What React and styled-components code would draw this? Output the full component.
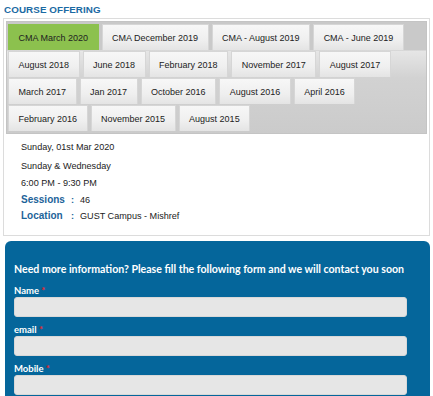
import React from "react";
import styled, { createGlobalStyle } from "styled-components";

const offerings = [
  "CMA March 2020",
  "CMA December 2019",
  "CMA - August 2019",
  "CMA - June 2019",
  "August 2018",
  "June 2018",
  "February 2018",
  "November 2017",
  "August 2017",
  "March 2017",
  "Jan 2017",
  "October 2016",
  "August 2016",
  "April 2016",
  "February 2016",
  "November 2015",
  "August 2015",
];

const fields = ["Name", "email", "Mobile"];

const GlobalStyle = createGlobalStyle`
  html, body {
    margin: 0;
    padding: 0;
    background: #fff;
    font-family: "Liberation Sans", Arial, sans-serif;
  }
`;

const App = () => {
  return (
    <Page>
      <GlobalStyle />
      <Title>COURSE OFFERING</Title>

      <Card>
        <TabNav>
          {offerings.map((o, i) => (
            <Tab key={o} $active={i === 0}>
              {o}
            </Tab>
          ))}
        </TabNav>

        <Details>
          <Line $gap={2}>Sunday, 01st Mar 2020</Line>
          <Line>Sunday &amp; Wednesday</Line>
          <Line>6:00 PM - 9:30 PM</Line>
          <InfoRow>
            <InfoLabel>Sessions</InfoLabel>
            <Colon>:</Colon>
            <span>46</span>
          </InfoRow>
          <InfoRow>
            <InfoLabel>Location</InfoLabel>
            <Colon>:</Colon>
            <span>GUST Campus - Mishref</span>
          </InfoRow>
        </Details>
      </Card>

      <FormPanel>
        <FormTitle>
          Need more information? Please fill the following form and we will
          contact you soon
        </FormTitle>
        {fields.map((f) => (
          <Field key={f}>
            <Label>
              {f} <Req>*</Req>
            </Label>
            <Input type="text" />
          </Field>
        ))}
      </FormPanel>
    </Page>
  );
};

const Page = styled.div`
  padding: 3px 3px 0 3px;
  height: 396px;
  box-sizing: border-box;
  overflow: hidden;
`;

const Title = styled.h2`
  margin: 0 0 0 1px;
  font-size: 9.8px;
  line-height: 13px;
  font-weight: 700;
  color: #1a6aa3;
  letter-spacing: 0.1px;
`;

const Card = styled.div`
  margin-top: 2px;
  border: 1px solid #dcdcdc;
  padding: 2px 2px 0 2px;
`;

const TabNav = styled.div`
  display: flex;
  flex-wrap: wrap;
  gap: 1px 3px;
  padding: 2px 4px 2px 1px;
  border: 1px solid #c4c4c4;
  background: linear-gradient(
    #c9c9c9 0,
    #c9c9c9 28px,
    #e6e6e6 29px,
    #d2d2d2 56px,
    #cbcbcb 100%
  );
`;

const Tab = styled.div`
  height: 26px;
  box-sizing: border-box;
  display: flex;
  align-items: center;
  padding: 0 9.5px;
  font-size: 9px;
  color: #222;
  border: 1px solid #d6d6d6;
  border-bottom: none;
  background: ${(p) =>
    p.$active
      ? "#8cc14e"
      : "linear-gradient(#f7f7f7 0%, #efefef 60%, #e4e4e4 100%)"};
  border-color: ${(p) => (p.$active ? "#8cc14e" : "#d6d6d6")};
  white-space: nowrap;
`;

const Details = styled.div`
  padding: 5px 15px 11px;
  font-size: 9.1px;
  color: #222;
`;

const Line = styled.div`
  line-height: 17px;
  margin-bottom: ${(p) => p.$gap || 0}px;
`;

const InfoRow = styled.div`
  display: flex;
  align-items: center;
  line-height: 16px;
`;

const InfoLabel = styled.span`
  width: 50px;
  font-size: 10px;
  font-weight: 700;
  color: #1d6399;
`;

const Colon = styled.span`
  width: 9px;
  font-weight: 700;
  color: #1d6399;
`;

const FormPanel = styled.div`
  margin: 5px 0 0 2px;
  background: #05669b;
  border-radius: 6px 6px 0 0;
  padding: 20px 23px 12px 9px;
`;

const FormTitle = styled.div`
  font-family: Lato, "Open Sans", sans-serif;
  font-weight: 700;
  font-size: 10.6px;
  line-height: 16px;
  color: #fff;
  white-space: nowrap;
  margin-bottom: 8px;
`;

const Field = styled.div`
  margin-bottom: 7px;
`;

const Label = styled.div`
  font-family: Lato, "Open Sans", sans-serif;
  font-weight: 700;
  font-size: 9.5px;
  line-height: 12px;
  color: #fff;
`;

const Req = styled.span`
  color: #e8262b;
`;

const Input = styled.input`
  display: block;
  width: 100%;
  height: 20px;
  box-sizing: border-box;
  border: 1px solid #d8d8d8;
  border-radius: 3px;
  background: #e6e6e6;
  outline: none;
`;

export default App;
